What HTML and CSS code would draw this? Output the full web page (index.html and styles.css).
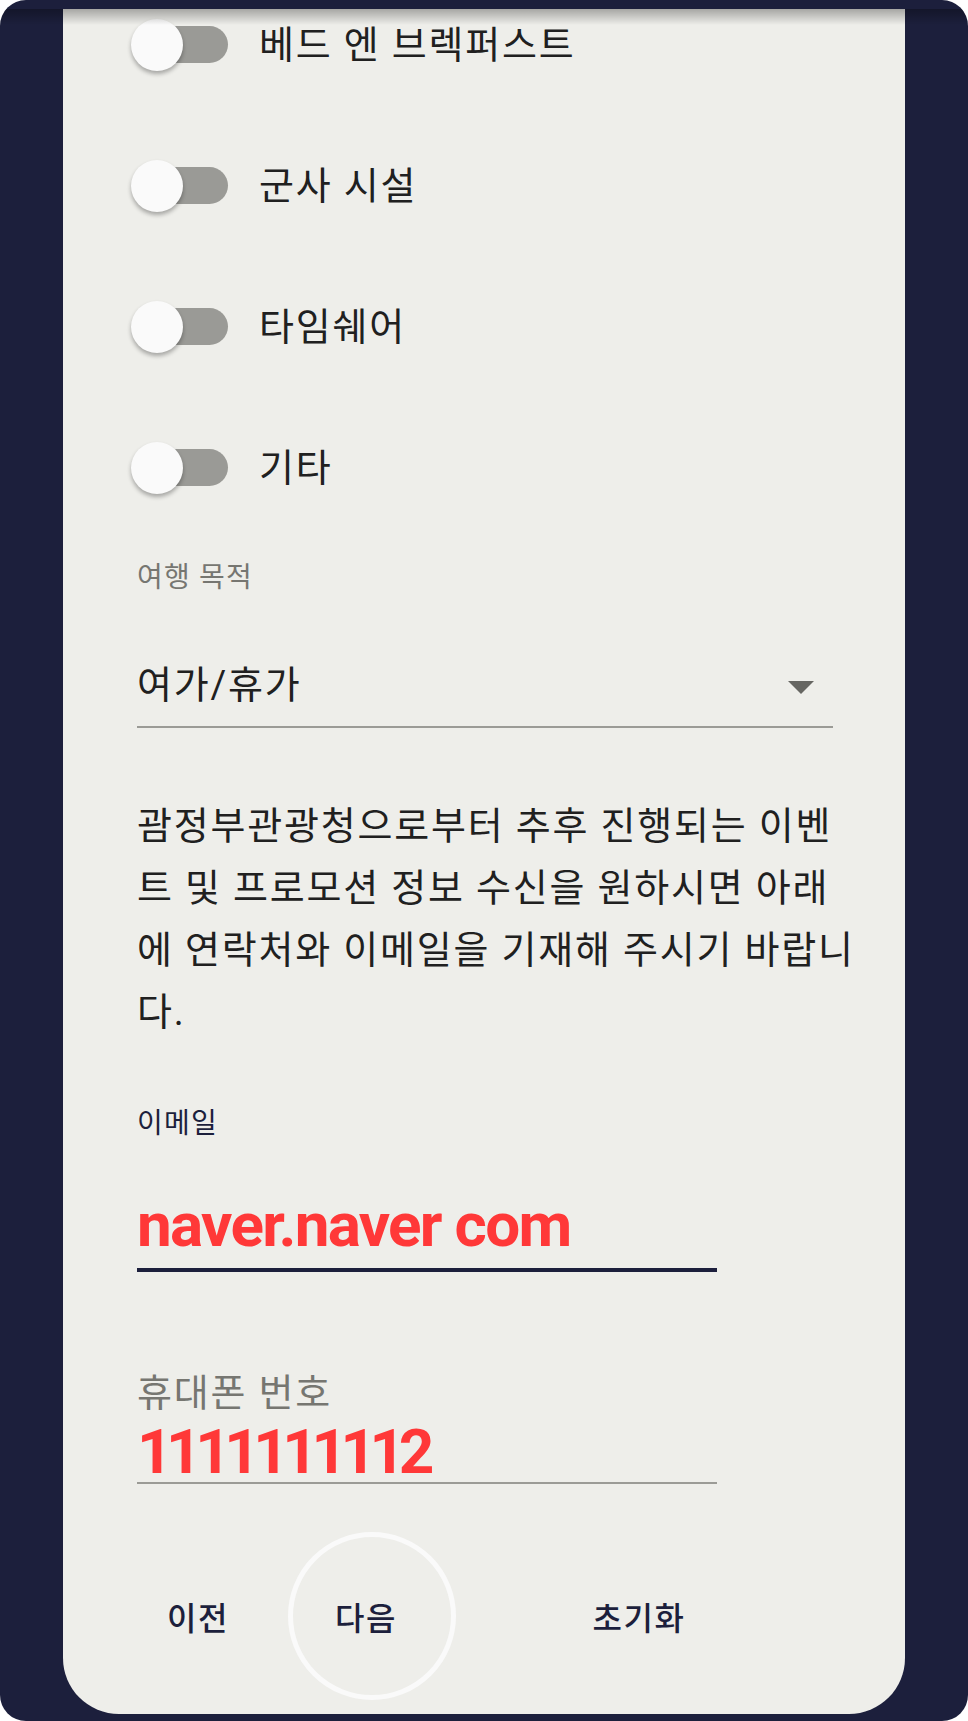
FILE: index.html
```html
<!DOCTYPE html>
<html lang="ko">

<head>
    <title>여행 정보</title>
    <meta charset="utf-8" />
    <link rel="stylesheet" href="styles.css">
</head>

<body>
    <div class="screen">
        <div class="sheet">
            <div class="form">
                <label class="toggle"><span class="switch"></span><span class="toggle-text">베드 엔 브렉퍼스트</span></label>
                <label class="toggle"><span class="switch"></span><span class="toggle-text">군사 시설</span></label>
                <label class="toggle"><span class="switch"></span><span class="toggle-text">타임쉐어</span></label>
                <label class="toggle"><span class="switch"></span><span class="toggle-text">기타</span></label>

                <div class="field-label">여행 목적</div>
                <div class="select">
                    <span>여가/휴가</span>
                    <span class="caret"></span>
                </div>

                <p class="notice">괌정부관광청으로부터 추후 진행되는 이벤트 및 프로모션 정보 수신을 원하시면 아래에 연락처와 이메일을 기재해 주시기 바랍니다.</p>

                <div class="input focused">
                    <div class="input-label">이메일</div>
                    <div class="input-value">naver.naver com</div>
                </div>
                <div class="input phone">
                    <div class="input-label">휴대폰 번호</div>
                    <div class="input-value">1111111112</div>
                </div>
            </div>

            <div class="actions">
                <button class="btn">이전</button>
                <button class="btn btn-current">다음</button>
                <button class="btn btn-reset">초기화</button>
            </div>
        </div>
        <div class="bar-shadow"></div>
    </div>
</body>

</html>
```

FILE: styles.css
```css
body {
    margin: 0;
    background: #fff;
    font-family: 'Roboto', 'Noto Sans CJK KR', sans-serif;
}
.screen {
    position: relative;
    height: 1721px;
    box-sizing: border-box;
    padding: 9px 63px 7px;
    background: #1c1f3c;
    border-radius: 26px;
    overflow: hidden;
}
/* shadow under the top bar, over the scrolled sheet */
.bar-shadow {
    position: absolute;
    top: 9px;
    left: 0;
    right: 0;
    height: 16px;
    background: linear-gradient(rgba(0, 0, 0, .3), rgba(0, 0, 0, 0));
}
.sheet {
    height: 1705px;
    background: #eeeeea;
    border-radius: 0 0 56px 56px;
    overflow: hidden;
}
.form {
    margin-top: -35px;
    padding-left: 74px;
}

/* switches */
.toggle {
    display: flex;
    align-items: center;
    height: 141px;
    margin-left: -6px;
}
.switch {
    position: relative;
    flex: none;
    width: 97px;
    height: 52px;
    margin-right: 31px;
}
.switch::before {
    content: "";
    position: absolute;
    left: 9px;
    top: 7px;
    width: 88px;
    height: 37px;
    border-radius: 19px;
    background: #9a9a96;
}
.switch::after {
    content: "";
    position: absolute;
    left: 0;
    top: 0;
    width: 52px;
    height: 52px;
    border-radius: 50%;
    background: #fafafa;
    box-shadow: 0 3px 4px rgba(0, 0, 0, .3);
}
.toggle-text {
    margin-bottom: 7px;
    font-size: 38px;
    letter-spacing: 1.8px;
    color: #202020;
}

/* dropdown */
.field-label {
    margin-top: 20px;
    font-size: 28px;
    letter-spacing: 1.2px;
    line-height: 40px;
    color: #767671;
}
.select {
    display: flex;
    align-items: center;
    justify-content: space-between;
    width: 696px;
    margin-top: 62px;
    padding-bottom: 16px;
    border-bottom: 2px solid #9b9b96;
    font-size: 38px;
    letter-spacing: 1.8px;
    line-height: 50px;
    color: #202020;
}
.caret {
    width: 0;
    height: 0;
    margin: 4px 19px 0 0;
    border-left: 13px solid transparent;
    border-right: 13px solid transparent;
    border-top: 13px solid #666662;
}

.notice {
    width: 720px;
    margin: 67px 0 0;
    font-size: 38px;
    letter-spacing: 1.8px;
    line-height: 62px;
    color: #202020;
}

/* text inputs */
.input {
    width: 580px;
}
.input-label {
    font-size: 38px;
    letter-spacing: 1.8px;
    line-height: 44px;
    color: #767671;
}
.input-value {
    font-family: 'Roboto', sans-serif;
    font-weight: bold;
    font-size: 62px;
    line-height: 52px;
    color: #ff3838;
    margin-top: 11px;
    padding-bottom: 4px;
    border-bottom: 2px solid #9b9b96;
    filter: blur(0.5px);
}
.input.focused {
    margin-top: 61px;
}
.input.focused .input-label {
    font-size: 28px;
    letter-spacing: 1.2px;
    line-height: 40px;
    color: #1c1f3c;
}
.input.focused .input-value {
    margin-top: 46px;
    letter-spacing: -1.7px;
    line-height: 70px;
    padding-bottom: 8px;
    border-bottom: 4px solid #1c1f3c;
}
.input.phone {
    margin-top: 99px;
}
.input.phone .input-value {
    letter-spacing: -6.5px;
}

/* bottom buttons */
.actions {
    display: flex;
    margin-top: 84px;
    padding-left: 51px;
}
.btn {
    position: relative;
    width: 168px;
    height: 96px;
    padding: 0;
    border: 0;
    background: none;
    font-family: 'Roboto', 'Noto Sans CJK KR', sans-serif;
    font-size: 32px;
    letter-spacing: 1.5px;
    font-weight: 500;
    color: #1c1f3c;
}
.btn-current::after {
    content: "";
    position: absolute;
    left: 6px;
    top: -36px;
    width: 158px;
    height: 158px;
    border: 5px solid #fafafa;
    border-radius: 50%;
}
.btn-reset {
    margin-left: 105px;
}
```
